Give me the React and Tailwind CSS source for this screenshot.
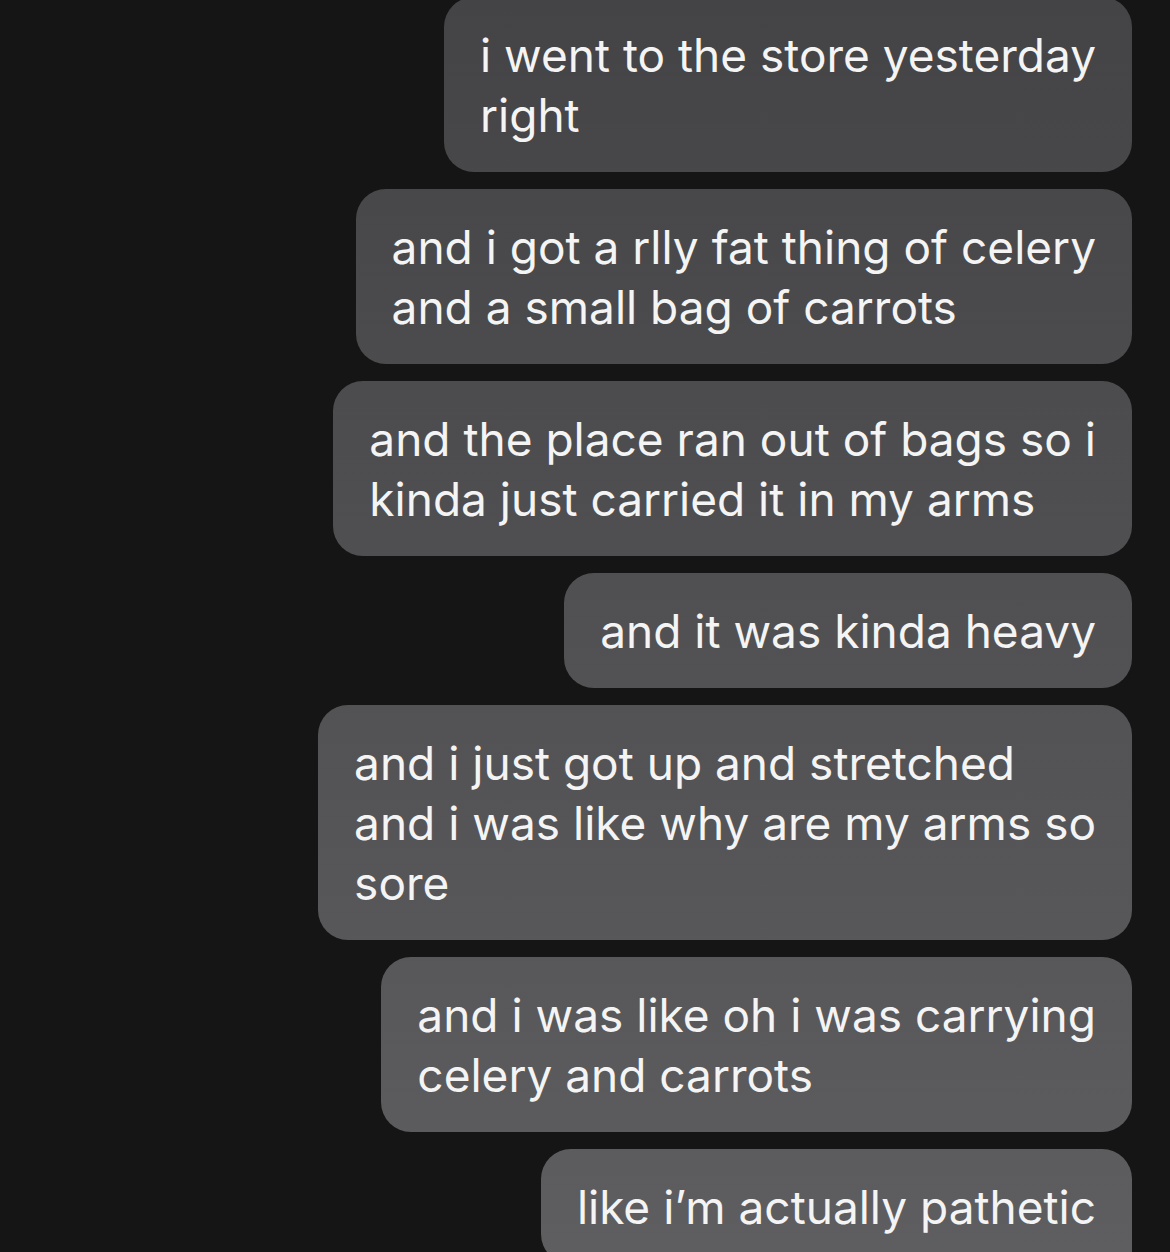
import React from 'react';

// Sent messages, top to bottom. Each entry is the bubble's wrapped lines.
const MESSAGES = [
  ['i went to the store yesterday', 'right'],
  ['and i got a rlly fat thing of celery', 'and a small bag of carrots'],
  ['and the place ran out of bags so i', 'kinda just carried it in my arms'],
  ['and it was kinda heavy'],
  ['and i just got up and stretched', 'and i was like why are my arms so', 'sore'],
  ['and i was like oh i was carrying', 'celery and carrots'],
  ['like i\u2019m actually pathetic'],
];

const Bubble = ({ lines, last }) => (
  <div
    className={
      'rounded-[30px] pl-[36px] pr-[36px] pt-[28px] pb-[27px] bg-linear-to-b from-[#444446] to-[#5e5e60] bg-fixed text-[#f4f4f4] text-[46px] leading-[60px] ' +
      (last ? 'rounded-br-[6px]' : '')
    }
  >
    {lines.map((line, i) => (
      <div key={i} className="whitespace-nowrap">{line}</div>
    ))}
  </div>
);

export default function App() {
  return (
    <div
      className="h-[1252px] overflow-hidden bg-[#151515]"
      style={{ fontFamily: 'Inter, "Noto Sans", sans-serif' }}
    >
      <div className="flex flex-col items-end gap-[17px] pr-[38px] -mt-[3px]">
        {MESSAGES.map((lines, i) => (
          <Bubble key={i} lines={lines} last={i === MESSAGES.length - 1} />
        ))}
      </div>
    </div>
  );
}
